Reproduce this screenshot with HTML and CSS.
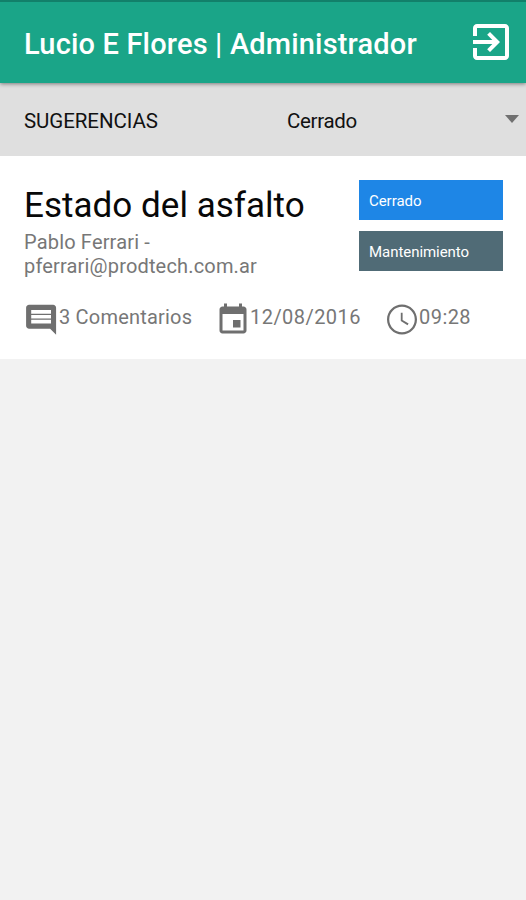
FILE: index.html
```html
<!DOCTYPE html>
<html lang="es">
<head>
<meta charset="utf-8">
<meta name="viewport" content="width=device-width">
<title>Sugerencias</title>
<link rel="stylesheet" href="styles.css">
</head>
<body>
<header class="appbar">
  <h1 class="appbar-title"><span>Lucio E Flores | Administrador</span></h1>
  <svg class="exit" viewBox="0 0 24 24"><path d="M10.09 15.59L11.5 17l5-5-5-5-1.41 1.41L12.67 11H3v2h9.67l-2.58 2.59zM19 3H5c-1.11 0-2 .9-2 2v4h2V5h14v14H5v-4H3v4c0 1.1.89 2 2 2h14c1.1 0 2-.9 2-2V5c0-1.1-.9-2-2-2z"/></svg>
</header>
<div class="filter">
  <span class="filter-label">SUGERENCIAS</span>
  <div class="select"><span class="select-value">Cerrado</span><svg class="arrow" viewBox="0 0 14 8"><path d="M0 0h14L7 8z"/></svg></div>
</div>
<main class="card">
  <div class="card-top">
    <div class="info">
      <h2 class="title"><span>Estado del asfalto</span></h2>
      <p class="author"><span class="author-name">Pablo Ferrari -</span><br><span class="author-mail">pferrari@prodtech.com.ar</span></p>
    </div>
    <div class="tags">
      <div class="tag tag-state"><span>Cerrado</span></div>
      <div class="tag tag-area"><span>Mantenimiento</span></div>
    </div>
  </div>
  <div class="meta">
    <div class="meta-item comments"><svg viewBox="0.6 0.2 24 24"><path d="M21.99 4c0-1.1-.89-2-1.99-2H4c-1.1 0-2 .9-2 2v12c0 1.1.9 2 2 2h14l4 4-.01-18zM18.600 14.500H5.400v-2.500h13.200v2.500zm0-3.300H5.400V8.800h13.200v2.400zm0-3.200H5.400V5.500h13.200v2.500z"/></svg><span>3 Comentarios</span></div>
    <div class="meta-item date"><svg viewBox="0 0 24 24"><path d="M17 12h-5v5h5v-5zM16 1v2H8V1H6v2H5c-1.11 0-1.99.9-1.99 2L3 19c0 1.1.89 2 2 2h14c1.1 0 2-.9 2-2V5c0-1.1-.9-2-2-2h-1V1h-2zm3 18H5V8h14v11z"/></svg><span>12/08/2016</span></div>
    <div class="meta-item time"><svg viewBox="0 0.3 24 24"><path d="M11.99 2C6.47 2 2 6.48 2 12s4.47 10 9.99 10C17.52 22 22 17.52 22 12S17.52 2 11.99 2zM12 20.500a8.500 8.500 0 1 1 0-17 8.500 8.500 0 0 1 0 17zM12.400 7.500H11.200v5.500l4.500 2.800.7-1.100-4-2.400z"/></svg><span>09:28</span></div>
  </div>
</main>
</body>
</html>
```
FILE: styles.css
```css
* { box-sizing: border-box; }
body { margin: 0; min-height: 900px; background: #f2f2f2; font-family: Roboto, sans-serif; color: #111; }
h1, h2, p { margin: 0; font-weight: 400; }
svg { display: block; flex: none; }
span { white-space: nowrap; }

.appbar { position: relative; height: 83px; display: flex; align-items: center; justify-content: space-between; padding: 3px 11px 0 24px; background: #1aa588; border-top: 2px solid #12806a; box-shadow: 0 1px 4px rgba(0, 0, 0, .45); }
.appbar-title { font-size: 29px; line-height: 36px; font-weight: 500; letter-spacing: .17px; color: #fff; }
.exit { width: 48px; height: 48px; fill: #fff; margin-top: -4px; }

.filter { height: 73px; display: grid; grid-template-columns: 263px 1fr; align-items: center; padding: 3px 7px 0 24px; background: #dfdfdf; font-size: 20.5px; letter-spacing: -.07px; }
.select { display: flex; align-items: center; justify-content: space-between; }
.select-value { letter-spacing: -.3px; }
.arrow { width: 14px; height: 8px; fill: #707070; margin-top: -4px; }

.card { height: 203px; background: #fff; padding: 24px 23px 0 24px; }
.card-top { display: flex; justify-content: space-between; height: 122px; }
.title { padding-top: 2px; font-size: 35px; line-height: 48px; letter-spacing: .03px; color: #080808; }
.author { font-size: 20px; line-height: 24px; letter-spacing: .17px; color: #777; }
.tags { width: 144px; display: flex; flex-direction: column; gap: 11px; }
.tag { height: 40px; padding: 1px 10px 0; display: flex; align-items: center; font-size: 15px; letter-spacing: -.05px; color: #fff; }
.tag-state { background: #1e86e6; }
.tag-area { background: #506b76; }

.meta { display: flex; }
.meta-item { display: flex; height: 36px; font-size: 20px; line-height: 30px; letter-spacing: .2px; color: #777; }
.meta-item svg { width: 36px; height: 36px; fill: #6f6f6f; }
.meta-item span { margin-left: -1px; }
.meta-item.comments path { stroke: none; }
.comments { width: 191px; }
.date { width: 169px; letter-spacing: .45px; }
.time { letter-spacing: .45px; }
```
